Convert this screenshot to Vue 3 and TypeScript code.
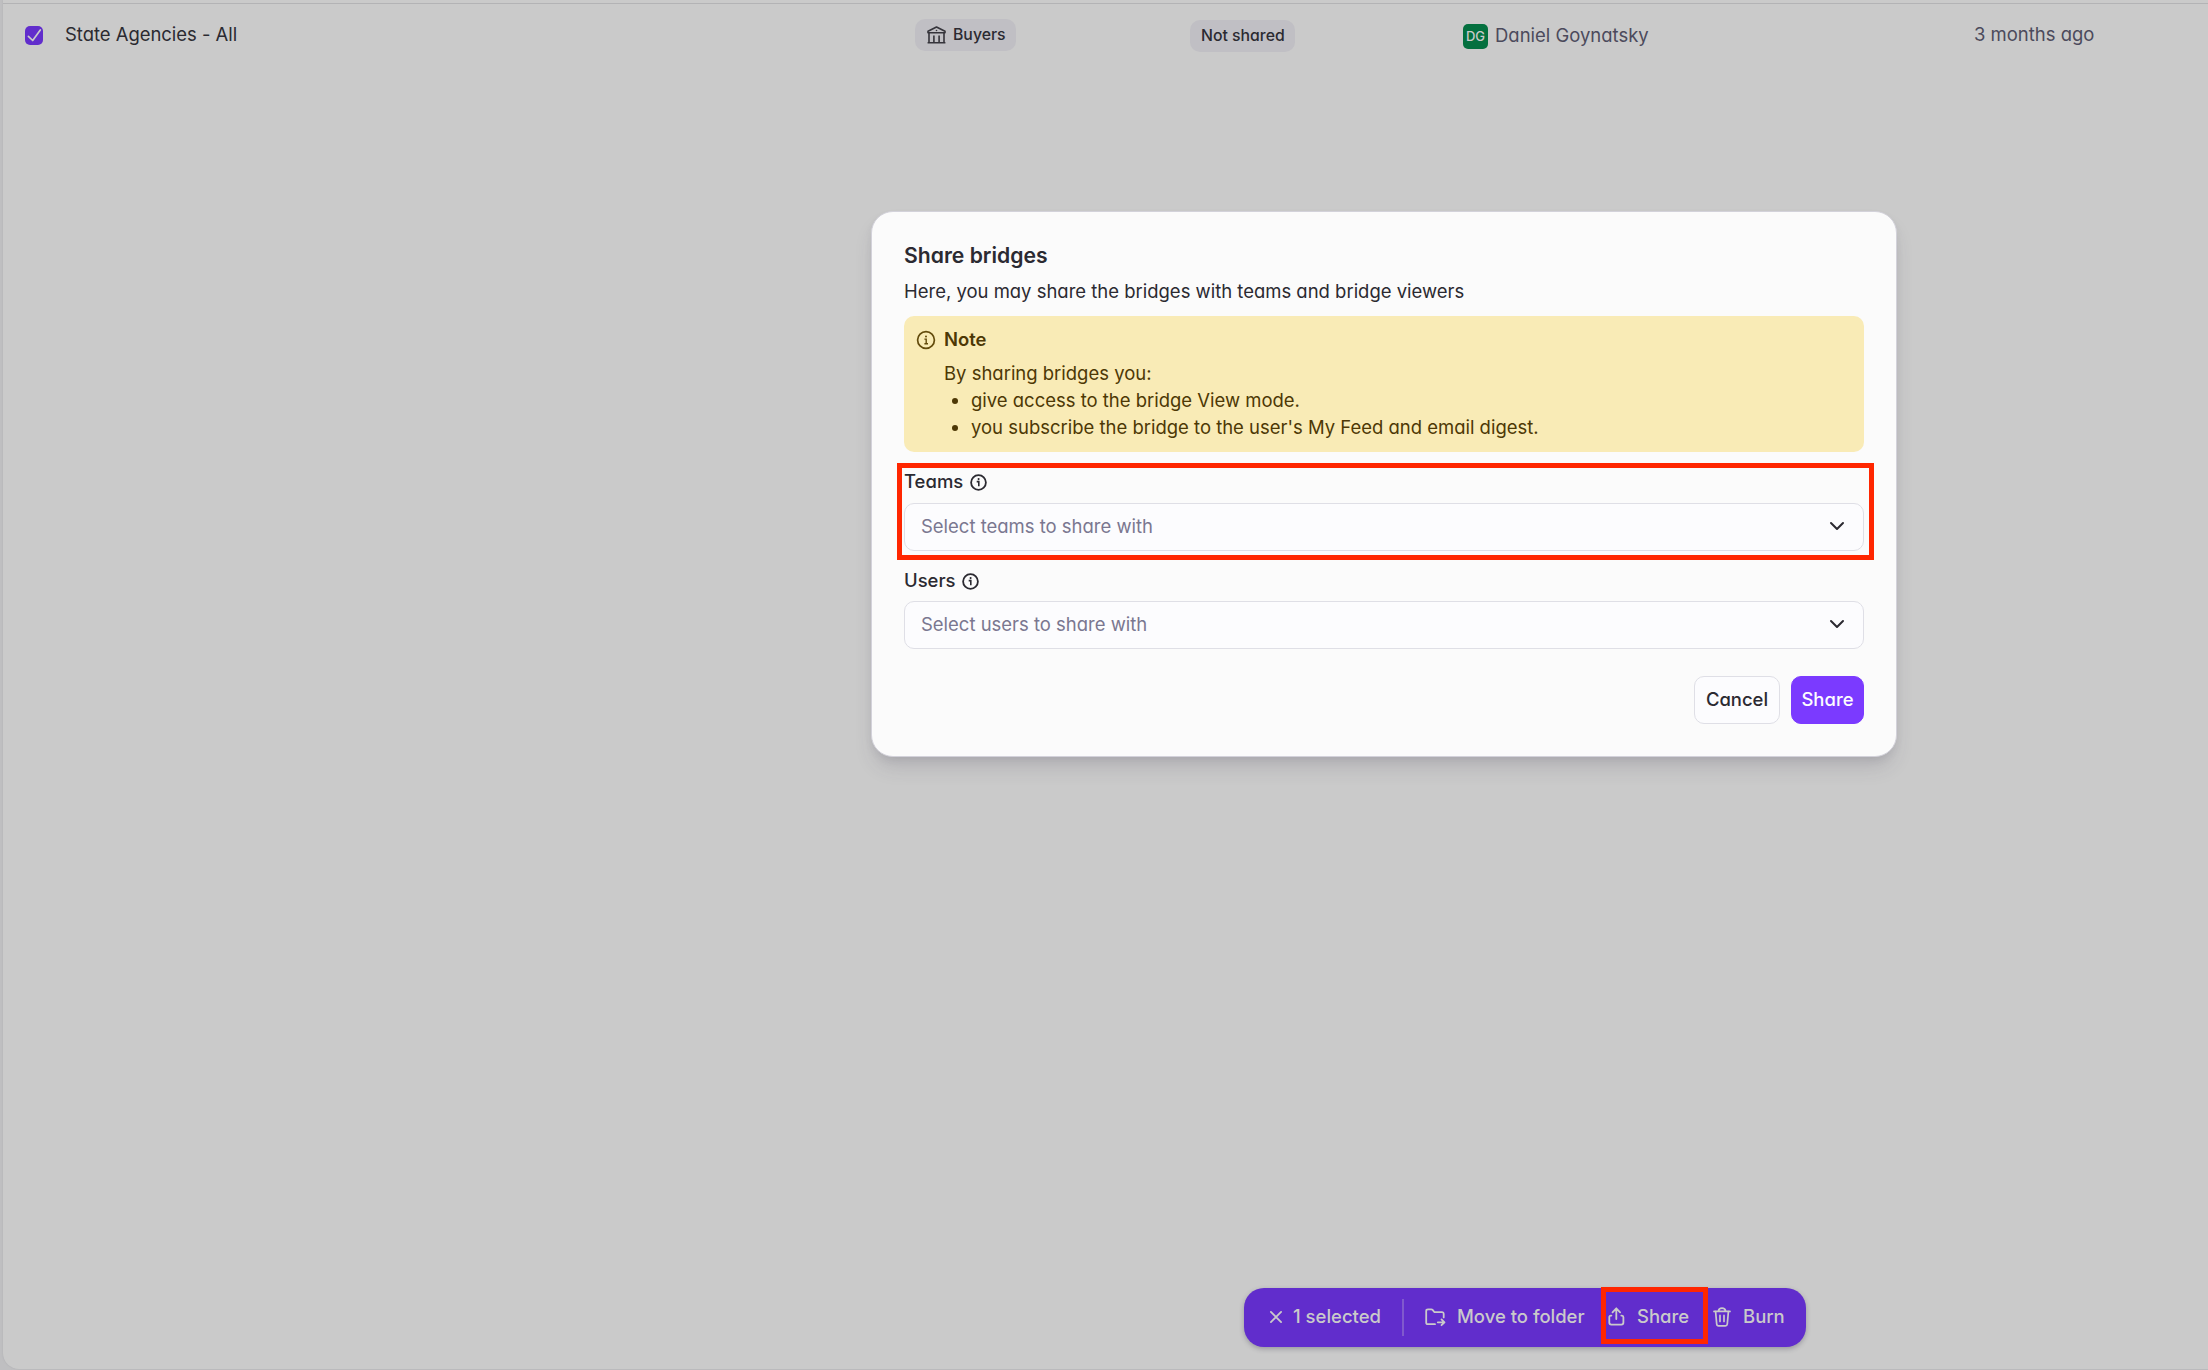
<script setup lang="ts">
interface Field {
  id: string
  label: string
  placeholder: string
  highlighted: boolean
}

const fields: Field[] = [
  { id: 'teams', label: 'Teams', placeholder: 'Select teams to share with', highlighted: true },
  { id: 'users', label: 'Users', placeholder: 'Select users to share with', highlighted: false },
]

const effects: string[] = [
  'give access to the bridge View mode.',
  "you subscribe the bridge to the user's My Feed and email digest.",
]
</script>

<template>
  <div class="screen">
    <main class="panel">
      <div class="row">
        <div class="cell name">
          <span class="checkbox">
            <svg width="18" height="19" viewBox="0 0 18 19" fill="none" stroke="#cacaca" stroke-width="1.7" stroke-linecap="round" stroke-linejoin="round">
              <path d="M3.4 10.4 L7.7 14.5 L15.3 4" />
            </svg>
          </span>
          <span class="title">State Agencies - All</span>
        </div>
        <div class="cell kind">
          <span class="pill">
            <svg width="19" height="18" viewBox="0 0 19 18" fill="none" stroke="#35343b" stroke-width="1.6">
              <path d="M1 5.3 L9.5 1 L18 5.3 V6.7 H1 Z" stroke-linejoin="round" />
              <path d="M2 6.7 V16.6 M17 6.7 V16.6 M6.9 9.6 V16.6 M12.1 9.6 V16.6 M.6 16.8 H18.4" />
              <circle cx="9.5" cy="4.5" r=".8" fill="#35343b" stroke="none" />
            </svg>
            Buyers
          </span>
        </div>
        <div class="cell status"><span class="pill">Not shared</span></div>
        <div class="cell owner"><span class="avatar">DG</span><span class="owner-name">Daniel Goynatsky</span></div>
        <div class="cell date">3 months ago</div>
      </div>
    </main>

    <section class="dialog">
      <h2>Share bridges</h2>
      <p class="desc">Here, you may share the bridges with teams and bridge viewers</p>
      <div class="note">
        <div class="note-head">
          <svg width="20" height="20" viewBox="0 0 20 20" fill="none" stroke="#634b0c" stroke-width="1.7">
            <circle cx="10" cy="10" r="8.4" />
            <path d="M8.4 9.1 H10.2 V13.8 M8.4 13.8 H12" stroke-width="1.4" />
            <circle cx="10" cy="6.4" r="1" fill="#634b0c" stroke="none" />
          </svg>
          <strong>Note</strong>
        </div>
        <div class="note-body">
          <p>By sharing bridges you:</p>
          <ul>
            <li v-for="effect in effects" :key="effect">{{ effect }}</li>
          </ul>
        </div>
      </div>
      <div v-for="field in fields" :key="field.id" class="field" :class="{ highlighted: field.highlighted }">
        <div class="label">
          {{ field.label }}
          <svg width="17" height="17" viewBox="0 0 17 17" fill="none" stroke="#2b2a31" stroke-width="1.8">
            <circle cx="8.5" cy="8.5" r="7.4" />
            <path d="M6.7 7.6 H8.8 V12.2" stroke-width="1.6" />
            <circle cx="8.6" cy="5.1" r="1.05" fill="#2b2a31" stroke="none" />
          </svg>
        </div>
        <div class="select">
          <span>{{ field.placeholder }}</span>
          <svg width="16" height="10" viewBox="0 0 16 10" fill="none" stroke="#2b2a31" stroke-width="2" stroke-linecap="round" stroke-linejoin="round">
            <path d="M2 2 L8 8 L14 2" />
          </svg>
        </div>
      </div>
      <div class="actions">
        <button class="cancel" type="button">Cancel</button>
        <button class="primary" type="button">Share</button>
      </div>
    </section>

    <div class="bar">
      <div class="action selected">
        <svg width="14" height="14" viewBox="0 0 14 14" fill="none" stroke="#cacaca" stroke-width="1.8" stroke-linecap="round">
          <path d="M1.9 1.9 L12.1 12.1 M12.1 1.9 L1.9 12.1" />
        </svg>
        <span>1 selected</span>
      </div>
      <span class="divider"></span>
      <div class="action move">
        <svg width="21" height="19" viewBox="0 0 21 19" fill="none" stroke="#cacaca" stroke-width="1.8" stroke-linecap="round" stroke-linejoin="round">
          <path d="M10 16.2 H3 Q1.2 16.2 1.2 14.4 V3 Q1.2 1.3 3 1.3 H6.3 Q7.1 1.3 7.6 1.9 L9.5 4.2 H17.2 Q18.7 4.2 18.7 5.8 V9.4" />
          <path d="M12.8 14.3 H19.2 M16.5 11.4 L19.5 14.3 L16.5 17.2" />
        </svg>
        <span>Move to folder</span>
      </div>
      <div class="action share">
        <svg width="17" height="19" viewBox="0 0 17 19" fill="none" stroke="#cacaca" stroke-width="1.8" stroke-linecap="round" stroke-linejoin="round">
          <path d="M8.3 12 V1.5 M4.5 5.3 L8.3 1.4 L12.1 5.3" />
          <path d="M3.4 8.6 H2.8 Q1.3 8.6 1.3 10.2 V15.6 Q1.3 17.6 3.3 17.6 H13.4 Q15.4 17.6 15.4 15.6 V10.2 Q15.4 8.6 13.9 8.6 H13.3" />
        </svg>
        <span>Share</span>
      </div>
      <div class="action burn">
        <svg width="18" height="20" viewBox="0 0 18 20" fill="none" stroke="#cacaca" stroke-width="1.7" stroke-linecap="round" stroke-linejoin="round">
          <path d="M1 4.4 H17 M5.4 4.2 Q5.8 1.2 9 1.2 Q12.2 1.2 12.6 4.2" />
          <path d="M2.6 4.6 L3.7 17 Q3.9 18.9 5.6 18.9 H12.4 Q14.1 18.9 14.3 17 L15.4 4.6" />
          <path d="M7 8.4 V14.4 M11 8.4 V14.4" />
        </svg>
        <span>Burn</span>
      </div>
    </div>
  </div>
</template>

<style>
body {
  margin: 0;
}
</style>

<style scoped>
.screen {
  position: relative;
  box-sizing: border-box;
  width: 2208px;
  height: 1370px;
  overflow: hidden;
  padding-left: 3px;
  background: #bfbfc1;
  font-family: Inter, 'Liberation Sans', sans-serif;
  font-size: 18.48px;
  font-feature-settings: 'cv11';
  line-height: 27px;
  color: #2b2a31;
}
p, h2, ul {
  margin: 0;
  padding: 0;
}
svg {
  flex: none;
  display: block;
}
.panel {
  box-sizing: border-box;
  height: 1369px;
  padding-top: 3px;
  border-radius: 0 0 0 16px;
  background: #cacaca;
  box-shadow: 0 0 2px #adadb0;
}
.row {
  display: grid;
  grid-template-columns: 912px 275px 272px 512px 1fr;
  height: 62px;
  border-top: 1px solid #b3b3b5;
}
.cell {
  display: flex;
  align-items: center;
  box-sizing: border-box;
  height: 61px;
  white-space: nowrap;
}
.name {
  padding-left: 22px;
}
.checkbox {
  width: 18px;
  height: 19px;
  margin: 1px 22px 0 0;
  border-radius: 5px;
  background: #612dcc;
}
.title {
  letter-spacing: -0.03px;
}
.pill {
  display: flex;
  align-items: center;
  gap: 7px;
  box-sizing: border-box;
  height: 32px;
  padding: 0 11px;
  border-radius: 10px;
  background: #c0bfc4;
  font-size: 15.8px;
  font-weight: 500;
}
.kind .pill {
  padding: 0 10px 0 12px;
}
.status {
  padding-top: 3px;
}
.status .pill {
  padding: 0 10px 2px 11px;
}
.owner {
  padding-top: 2px;
  color: #4c4a5c;
}
.avatar {
  width: 25px;
  height: 25px;
  margin: 2px 7px 0 1px;
  border-radius: 5px;
  background: #04703f;
  color: #cacaca;
  font-size: 13px;
  font-weight: 500;
  line-height: 25px;
  text-align: center;
}
.date {
  color: #4c4a5c;
}
.dialog {
  position: absolute;
  left: 871px;
  top: 211px;
  display: flex;
  flex-direction: column;
  box-sizing: border-box;
  width: 1026px;
  height: 546px;
  padding: 29px 32px 32px;
  border: 1px solid #d3d2da;
  border-radius: 22px;
  background: #fbfbfb;
  box-shadow: 0 13px 20px -4px rgba(60, 55, 80, 0.17), 0 4px 8px -2px rgba(60, 55, 80, 0.1);
  color: #2b2a31;
}
h2 {
  height: 30px;
  font-size: 21.15px;
  font-weight: 600;
  line-height: 30px;
}
.desc {
  margin-top: 7px;
}
.note {
  box-sizing: border-box;
  height: 136px;
  margin-top: 11px;
  padding: 10px 11px;
  border-radius: 10px;
  background: #f9ebb6;
  color: #4d3805;
}
.note-head {
  display: flex;
  align-items: center;
  gap: 8px;
  height: 27px;
  padding-left: 1px;
}
.note-head strong {
  font-weight: 600;
}
.note-body {
  margin-top: 7px;
  padding-left: 29px;
}
ul {
  list-style: none;
}
li {
  display: flex;
  align-items: center;
}
li::before {
  content: '';
  width: 6px;
  height: 6px;
  margin: 1px 13px 0 8px;
  border-radius: 50%;
  background: currentColor;
}
.field {
  position: relative;
  height: 83px;
  margin-top: 16px;
}
.field + .field {
  height: 82px;
}
.field + .field .select {
  margin-top: 7px;
}
.label {
  display: flex;
  align-items: center;
  gap: 6.5px;
  height: 27px;
  font-weight: 500;
}
.label svg {
  margin-top: 1px;
}
.select {
  display: flex;
  align-items: center;
  justify-content: space-between;
  box-sizing: border-box;
  height: 48px;
  margin-top: 8px;
  padding: 0 18px 2px 16px;
  border: 1px solid #dfdfe6;
  border-radius: 10px;
  background: #fcfcfe;
  color: #7a7790;
}
.highlighted::after {
  content: '';
  position: absolute;
  inset: -5px -10px -9px -7px;
  border: 5px solid #ff2600;
}
.actions {
  display: flex;
  justify-content: flex-end;
  gap: 11px;
  margin-top: 27px;
}
button {
  box-sizing: border-box;
  height: 48px;
  padding: 0 0 2px;
  border: 1px solid #dfdfe6;
  border-radius: 10px;
  background: #fcfcfe;
  color: #2b2a31;
  font: inherit;
  font-weight: 500;
  font-feature-settings: inherit;
}
.cancel {
  width: 86px;
}
.primary {
  width: 73px;
  border-color: #7b3aff;
  background: #7b3aff;
  color: #fcfcfe;
}
.bar {
  position: absolute;
  left: 1244px;
  top: 1288px;
  display: flex;
  align-items: center;
  box-sizing: border-box;
  width: 562px;
  height: 59px;
  padding-left: 25px;
  border-radius: 20px;
  background: #612dcc;
  box-shadow: 0 2px 5px rgba(40, 35, 60, 0.3);
  color: #cacaca;
  font-weight: 500;
  white-space: nowrap;
}
.action {
  display: flex;
  align-items: center;
}
.action span {
  margin-top: -2px;
}
.selected {
  gap: 10px;
  width: 133px;
}
.selected svg {
  margin-top: -1px;
}
.divider {
  width: 2px;
  height: 37px;
  margin-right: 21px;
  background: #8059cd;
}
.move {
  gap: 11px;
  width: 183px;
}
.share {
  position: relative;
  gap: 12px;
  width: 105px;
}
.share svg {
  margin-top: -2px;
}
.share::after {
  content: '';
  position: absolute;
  left: -7px;
  top: -18px;
  box-sizing: border-box;
  width: 107px;
  height: 57px;
  border: 5px solid #ff2600;
}
.burn {
  gap: 12px;
}
.burn svg {
  margin-top: -1px;
}
</style>
